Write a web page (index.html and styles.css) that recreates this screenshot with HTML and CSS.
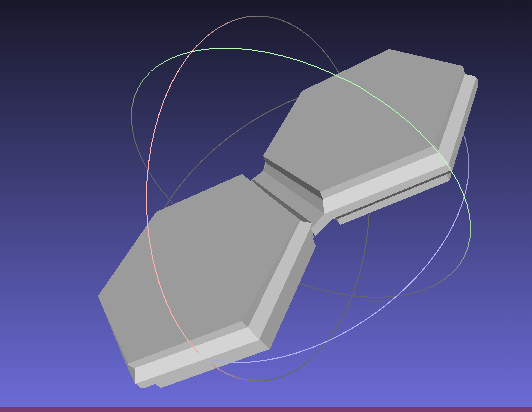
FILE: index.html
```
<!DOCTYPE html>
<html lang="en">
<head>
    <meta charset="UTF-8">
    <meta name="viewport" content="width=device-width, initial-scale=1.0">
    <title>Mesh Viewer</title>
    <link rel="stylesheet" href="styles.css">
</head>
<body>
    <main class="viewport">
        <svg class="scene" viewBox="0 0 532 407" role="img" aria-label="Two joined hexagonal tiles inside a trackball">
            <defs>
                <linearGradient id="redFade" gradientUnits="userSpaceOnUse" x1="-75" y1="0" x2="8" y2="0">
                    <stop offset="0" stop-color="#ffb2b2"/>
                    <stop offset="1" stop-color="#666666"/>
                </linearGradient>
                <linearGradient id="greenFade" gradientUnits="userSpaceOnUse" x1="0" y1="45" x2="0" y2="-55">
                    <stop offset="0" stop-color="#666666"/>
                    <stop offset="1" stop-color="#b2ffb2"/>
                </linearGradient>
                <linearGradient id="blueFade" gradientUnits="userSpaceOnUse" x1="0" y1="-20" x2="0" y2="80">
                    <stop offset="0" stop-color="#666666"/>
                    <stop offset="1" stop-color="#b2b2ff"/>
                </linearGradient>

                <ellipse id="redRing" class="ring red" rx="111.5" ry="182.5" transform="translate(258 198.5)"/>
                <ellipse id="greenRing" class="ring green" rx="183.6" ry="102.9" transform="translate(301 172.7) rotate(27.5)"/>
                <ellipse id="blueRing" class="ring blue" rx="182.3" ry="114.2" transform="translate(305.5 222.7) rotate(-34.6)"/>

                <clipPath id="redFront">
                    <rect x="140" y="190" width="60" height="163"/>
                    <rect x="211" y="360" width="60" height="30"/>
                </clipPath>
                <clipPath id="greenFront">
                    <rect x="300" y="40" width="170" height="160"/>
                </clipPath>
                <clipPath id="blueFront">
                    <rect x="212" y="350" width="80" height="20"/>
                </clipPath>
            </defs>

            <!-- trackball, far side -->
            <use href="#redRing"/>
            <use href="#greenRing"/>
            <use href="#blueRing"/>

            <!-- hinge between the tiles -->
            <g class="hinge">
                <polygon class="face" points="266,160 263,171 251,180 250,184 298,226 311,234 316,230 334,213 320,193"/>
                <polygon class="recess" points="267,162 323,198 324,213 263,171"/>
                <polygon class="shadow" points="263,156 321,192 323,200 266,163"/>
                <polygon class="light" points="324,214 336,210 334,218 315,236 311,229"/>
                <polygon class="groove" points="250,179 254,180 313,224 300,223 294,218"/>
            </g>

            <!-- upper tile -->
            <g class="tile">
                <polygon class="groove" points="334,219 340,217 342,223 339,224"/>
                <polygon class="light" points="337,219 450,172 449,181 340,225"/>
                <polygon class="side" points="448,173 452,171 450,181 447,176"/>
                <polygon class="face" points="263,156 302,91 389,49 463,66 465,74 438,152 322,198 321,192"/>
                <polygon class="side" points="463,72 465,74 438,152 434,146"/>
                <polygon class="light" points="320,192 435,145 439,152 323,199"/>
                <polygon class="side" points="475,77 478,80 478,86 452,172 448,164"/>
                <polygon class="edge" points="465,74 474,76 476,78 449,164 438,151"/>
                <polygon class="light" points="324,213 449,163 452,171 334,219"/>
                <polygon class="bright" points="323,199 439,152 449,164 324,214"/>
                <line class="seam" x1="335" y1="219" x2="452" y2="171"/>
            </g>

            <!-- lower tile -->
            <g class="tile">
                <polygon class="face" points="98,296 156,212 242,174 299,219 302,222 248,328 135,369 127,364"/>
                <polygon class="recess" points="98,296 128,363 135,368 135,384 126,364"/>
                <polygon class="side" points="299,219 302,222 248,327 242,321"/>
                <polygon class="side" points="312,223 311,229 314,237 313,239 316,246 270,349 259,340"/>
                <polygon class="edge" points="300,221 312,223 310,229 259,340 248,327"/>
                <polygon class="light" points="127,364 242,321 248,328 135,369"/>
                <polygon class="light" points="135,383 259,339 270,349 161,388 155,384 145,388 141,388"/>
                <polygon class="bright" points="135,368 248,327 259,340 135,384"/>
            </g>

            <!-- trackball, near side -->
            <g clip-path="url(#redFront)"><use href="#redRing"/></g>
            <g clip-path="url(#greenFront)"><use href="#greenRing"/></g>
            <g clip-path="url(#blueFront)"><use href="#blueRing"/></g>
        </svg>
    </main>
    <footer class="status-bar"></footer>
</body>
</html>
```

FILE: styles.css
```
body {
    margin: 0;
    height: 100vh;
    display: flex;
    flex-direction: column;
    font-family: "Liberation Sans", sans-serif;
}
.viewport {
    flex: 1;
    min-height: 0;
    background: linear-gradient(#18182a, #6b6bd6);
}
.scene {
    display: block;
    width: 100%;
    height: 100%;
    shape-rendering: crispEdges;
}
.status-bar {
    height: 5px;
    background-color: #783c6e;
}
.ring {
    fill: none;
    stroke-width: 1;
}
.red {
    stroke: url(#redFade);
}
.green {
    stroke: url(#greenFade);
}
.blue {
    stroke: url(#blueFade);
}
.face {
    fill: #9b9b9b;
}
.side {
    fill: #979797;
}
.edge {
    fill: #bfbfbf;
}
.light {
    fill: #b2b2b2;
}
.bright {
    fill: #d4d4d4;
}
.recess {
    fill: #8c8c8c;
}
.groove {
    fill: #666666;
}
.shadow {
    fill: #595959;
}
.seam {
    stroke: #595959;
    stroke-width: 2;
}
```
